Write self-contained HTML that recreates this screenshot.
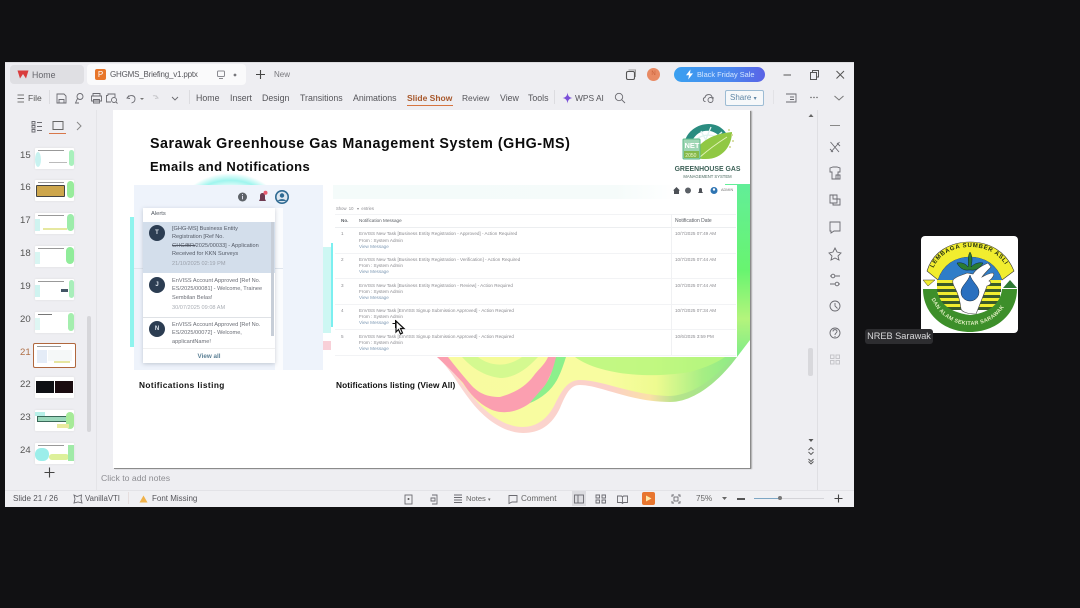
<!DOCTYPE html>
<html lang="en"><head><meta charset="utf-8"><title>GHGMS Briefing</title>
<style>
html,body{margin:0;padding:0;background:#111113;}
body{width:1080px;height:608px;position:relative;overflow:hidden;font-family:"Liberation Sans",sans-serif;}
#w{position:absolute;left:0;top:0;width:1080px;height:608px;background:#111113;filter:blur(.35px);overflow:hidden;}
.a{position:absolute;white-space:nowrap;}
.t{position:absolute;white-space:nowrap;color:#55555a;font-size:8.8px;line-height:12px;}
.m{position:absolute;white-space:nowrap;color:#8b8b90;font-size:4.6px;line-height:6px;}
.n{position:absolute;white-space:nowrap;color:#6a6d75;font-size:5.6px;line-height:8.3px;}
.num{position:absolute;left:20px;font-size:9.6px;line-height:12px;color:#555;}
.th{position:absolute;left:35px;width:39px;height:21px;background:#fff;border-radius:1px;box-shadow:0 0 2px #ddd;overflow:hidden;}
svg{position:absolute;overflow:visible;}
.ic{fill:none;stroke:#6a6a70;stroke-width:.9;}
</style></head><body><div id="w">

<!-- window -->
<div class="a" style="left:5px;top:62px;width:849px;height:445px;background:#eeeef2;"></div>
<div class="a" style="left:5px;top:62px;width:849px;height:1px;background:#dddde0;"></div>

<!-- tabs -->
<div class="a" style="left:10px;top:65px;width:74px;height:19px;background:#dfdfe3;border-radius:4px;"></div>
<div class="a" style="left:87px;top:64px;width:159px;height:21px;background:#fafafb;border-radius:4px;"></div>
<svg style="left:17px;top:70px" width="12" height="9" viewBox="0 0 12 9"><path d="M0.5 0.5H11.5L9 8.5L6 4L3 8.5Z" fill="#d93d3d"/></svg>
<div class="t" style="left:32px;top:69px;color:#66666c;">Home</div>
<div class="a" style="left:95px;top:69px;width:11px;height:11px;background:#e8762a;border-radius:2px;color:#fff;font-size:8px;line-height:11px;text-align:center;">P</div>
<div class="t" style="left:110px;top:69px;color:#57575c;font-size:8px;letter-spacing:-.2px;">GHGMS_Briefing_v1.pptx</div>
<svg style="left:216px;top:70px" width="22" height="10"><rect x="1.5" y="1" width="7" height="5.5" rx="1" fill="none" stroke="#8a8a90"/><path d="M3 8.5H7" stroke="#8a8a90"/><circle cx="19" cy="5" r="1.4" fill="#77777c"/></svg>
<svg style="left:255px;top:69px" width="11" height="11"><path d="M5.5 1V10M1 5.5H10" stroke="#444" stroke-width="1.1"/></svg>
<div class="t" style="left:274px;top:69px;color:#77777c;font-size:8px;">New</div>

<!-- title bar right -->
<svg style="left:625px;top:69px" width="12" height="12"><rect x="1.5" y="2.5" width="8" height="8" rx="1.5" fill="none" stroke="#555" stroke-width="1.1"/><path d="M3.5 1H10.5V8" fill="none" stroke="#999"/></svg>
<div class="a" style="left:647px;top:68px;width:13px;height:13px;border-radius:50%;background:#e88a64;color:#c9623c;font-size:6px;line-height:13px;text-align:center;">N</div>
<div class="a" style="left:674px;top:67px;width:91px;height:15px;border-radius:8px;background:linear-gradient(90deg,#3aa0f0,#4a88ee 60%,#5a62e6);color:#d6e8ff;font-size:7.4px;line-height:15px;text-indent:23px;">Black Friday Sale</div>
<svg style="left:685px;top:69px" width="9" height="11"><path d="M5.5 0.5L1 6.3H4L3.2 10.5L8 4.4H5Z" fill="#fff"/></svg>
<svg style="left:783px;top:69px" width="62" height="12"><path d="M0.5 6H8" stroke="#555"/><rect x="27.5" y="3.5" width="6" height="7" fill="none" stroke="#555"/><path d="M29.5 3.5V1.5H35.5V8H33.5" fill="none" stroke="#555"/><path d="M53.5 2L61 9.5M61 2L53.5 9.5" stroke="#555"/></svg>

<!-- ribbon -->
<svg style="left:17px;top:94px" width="8" height="9"><path d="M0.5 1H7M0.5 4.5H7M0.5 8H7" stroke="#777"/></svg>
<div class="t" style="left:28px;top:92px;color:#555;font-size:8.5px;">File</div>
<div class="a" style="left:49px;top:90px;width:1px;height:14px;background:#dcdce0;"></div>
<svg style="left:56px;top:92px" width="125" height="13" viewBox="0 0 125 13">
<path class="ic" d="M1 2H8L10 4V11H1ZM3 11V7.5H8V11"/>
<circle class="ic" cx="24" cy="4.5" r="3"/><path class="ic" d="M21.5 6.5L19.5 11H23"/>
<path class="ic" d="M37 4V1.5H44V4M35.5 4H45.5V9H35.5ZM37.5 7.5H43.5V11H37.5Z"/>
<path class="ic" d="M52 3.5V2H59V5M52 3.5H50.5V10H55"/><circle class="ic" cx="58" cy="8" r="2.5"/><path class="ic" d="M60 10L61.5 11.5"/>
<path class="ic" d="M73 3.5L71 6L74 6.5M71.5 5.5C74 2.5 79 3 79 7C79 9 77.5 10.5 75.5 11"/><path d="M84 6L86 8L88 6" fill="#777"/>
<path d="M100 3.5L102 6L99 6.5M101.5 5.5C99 2.5 97 4 97 4" fill="none" stroke="#c8c8cc"/>
<path class="ic" d="M116 5L119 8L122 5"/>
</svg>
<div class="a" style="left:189px;top:90px;width:1px;height:14px;background:#dcdce0;"></div>
<div class="t" style="left:196px;top:92px;">Home</div>
<div class="t" style="left:230px;top:92px;">Insert</div>
<div class="t" style="left:262px;top:92px;">Design</div>
<div class="t" style="left:300px;top:92px;">Transitions</div>
<div class="t" style="left:353px;top:92px;">Animations</div>
<div class="t" style="left:407px;top:92px;color:#a8582c;font-weight:bold;font-size:8.5px;">Slide Show</div>
<div class="a" style="left:407px;top:105px;width:46px;height:1px;background:#d6743f;"></div>
<div class="t" style="left:462px;top:92px;font-size:8.4px;">Review</div>
<div class="t" style="left:500px;top:92px;">View</div>
<div class="t" style="left:528px;top:92px;">Tools</div>
<div class="a" style="left:554px;top:90px;width:1px;height:14px;background:#dcdce0;"></div>
<svg style="left:562px;top:92px" width="11" height="12"><path d="M5.5 0.5C6 4 7 5.3 10.5 6C7 6.7 6 8 5.5 11.5C5 8 4 6.7 0.5 6C4 5.3 5 4 5.5 0.5Z" fill="#7a4fd8"/></svg>
<div class="t" style="left:575px;top:92px;font-size:8.4px;">WPS AI</div>
<svg style="left:614px;top:92px" width="12" height="12"><circle class="ic" cx="5" cy="5" r="3.7"/><path class="ic" d="M7.8 7.8L11 11"/></svg>
<svg style="left:702px;top:92px" width="13" height="12"><path class="ic" d="M3.5 9.5C1 9.5 0.5 6 3 5.5C3.5 2 9 1.5 10 5C11 5.3 11.5 6 11.5 6.5"/><circle class="ic" cx="8.5" cy="8" r="2.5"/></svg>
<div class="a" style="left:725px;top:90px;width:37px;height:14px;border:1px solid #9dbcd4;border-radius:2px;background:#f6f8fa;color:#5f86a6;font-size:8px;line-height:14px;text-indent:4px;">Share <span style="font-size:6px;">&#9662;</span></div>
<div class="a" style="left:773px;top:90px;width:1px;height:14px;background:#e2e2e6;"></div>
<svg style="left:785px;top:92px" width="60" height="12"><path class="ic" d="M3 2H11V10H3M1 2H3M1 10H3M5 5H9M5 7.5H9"/><circle cx="26" cy="5.5" r=".7" fill="#555"/><circle cx="29" cy="5.5" r=".7" fill="#555"/><circle cx="32" cy="5.5" r=".7" fill="#555"/><path d="M49.5 4L54 8L58.5 4" fill="none" stroke="#777"/></svg>

<!-- left pane -->
<div class="a" style="left:96px;top:110px;width:1px;height:380px;background:#e4e4e8;"></div>
<svg style="left:31px;top:120px" width="55" height="15"><path class="ic" d="M1 1.5H4V4H1ZM1 5.5H4V8H1ZM1 9.5H4V12H1ZM6 2.5H11M6 6.5H11M6 10.5H11" stroke-width=".8"/><rect x="22" y="1.5" width="10" height="8" fill="none" stroke="#666"/><path d="M46 2L50 6L46 10" fill="none" stroke="#888"/></svg>
<div class="a" style="left:49px;top:133px;width:17px;height:1px;background:#d8774a;"></div>

<div class="num" style="top:150px;">15</div>
<div class="num" style="top:182px;">16</div>
<div class="num" style="top:215px;">17</div>
<div class="num" style="top:248px;">18</div>
<div class="num" style="top:281px;">19</div>
<div class="num" style="top:314px;">20</div>
<div class="num" style="top:347px;color:#b07048;">21</div>
<div class="num" style="top:379px;">22</div>
<div class="num" style="top:412px;">23</div>
<div class="num" style="top:445px;">24</div>

<div class="th" style="top:148px;"><div class="a" style="left:3px;top:2px;width:26px;height:1px;background:#999;"></div><div class="a" style="left:0;top:4px;width:6px;height:15px;background:#c8f2f0;border-radius:50%;"></div><div class="a" style="right:0;top:2px;width:5px;height:16px;background:#a8f0bc;border-radius:3px;"></div><div class="a" style="left:14px;top:14px;width:18px;height:1px;background:#bbb;"></div></div>
<div class="th" style="top:180px;"><div class="a" style="left:3px;top:2px;width:26px;height:1px;background:#999;"></div><div class="a" style="left:1px;top:5px;width:27px;height:10px;background:#cda64c;border:1px solid #444;border-radius:1px;"></div><div class="a" style="right:0;top:1px;width:7px;height:17px;background:#98ec9c;border-radius:4px;"></div></div>
<div class="th" style="top:213px;"><div class="a" style="left:3px;top:2px;width:26px;height:1px;background:#999;"></div><div class="a" style="left:0;top:6px;width:5px;height:12px;background:#cff3f0;"></div><div class="a" style="right:0;top:1px;width:7px;height:17px;background:#9cecaa;border-radius:4px;"></div><div class="a" style="left:8px;top:15px;width:24px;height:2px;background:#e6e8a0;"></div></div>
<div class="th" style="top:246px;"><div class="a" style="left:3px;top:2px;width:26px;height:1px;background:#999;"></div><div class="a" style="left:0;top:6px;width:5px;height:12px;background:#d8f5f2;"></div><div class="a" style="right:0;top:1px;width:8px;height:17px;background:#90ec9a;border-radius:5px;"></div></div>
<div class="th" style="top:279px;"><div class="a" style="left:3px;top:2px;width:26px;height:1px;background:#999;"></div><div class="a" style="left:0;top:6px;width:5px;height:12px;background:#cff3f0;"></div><div class="a" style="right:0;top:1px;width:5px;height:18px;background:#a8eeba;border-radius:3px;"></div><div class="a" style="left:26px;top:10px;width:7px;height:3px;background:#456;"></div></div>
<div class="th" style="top:312px;"><div class="a" style="left:3px;top:2px;width:14px;height:1px;background:#777;"></div><div class="a" style="left:0;top:6px;width:5px;height:12px;background:#def6f3;"></div><div class="a" style="right:0;top:1px;width:6px;height:18px;background:#a4eeae;border-radius:4px;"></div></div>
<div class="a" style="left:33px;top:343px;width:41px;height:23px;border:1px solid #b0673d;border-radius:2px;background:#fff;overflow:hidden;"><div class="a" style="left:3px;top:2px;width:24px;height:1px;background:#999;"></div><div class="a" style="left:3px;top:6px;width:10px;height:13px;background:#e4ecf7;"></div><div class="a" style="left:14px;top:6px;width:24px;height:11px;background:#f5f8f8;"></div><div class="a" style="left:20px;top:17px;width:16px;height:2px;background:#e6e6a0;"></div></div>
<div class="th" style="top:377px;"><div class="a" style="left:1px;top:4px;width:18px;height:12px;background:#0e1014;"></div><div class="a" style="left:20px;top:4px;width:18px;height:12px;background:#1a0c10;"></div></div>
<div class="th" style="top:410px;"><div class="a" style="left:2px;top:6px;width:29px;height:4px;background:#9bd8bc;border:1px solid #3a6a5a;"></div><div class="a" style="right:0;top:2px;width:8px;height:17px;background:#a6ea98;border-radius:4px;"></div><div class="a" style="left:0;top:2px;width:10px;height:4px;background:#b8f0e8;"></div><div class="a" style="left:22px;top:14px;width:12px;height:4px;background:#e8ea9e;"></div></div>
<div class="th" style="top:443px;"><div class="a" style="left:3px;top:2px;width:26px;height:1px;background:#999;"></div><div class="a" style="left:0;top:5px;width:14px;height:13px;background:#9ceeea;border-radius:6px;"></div><div class="a" style="left:14px;top:11px;width:20px;height:6px;background:#ddf09a;border-radius:3px;"></div><div class="a" style="right:0;top:2px;width:6px;height:16px;background:#a0eaa8;"></div></div>
<div class="a" style="left:87px;top:316px;width:4px;height:116px;background:#d6d6da;border-radius:2px;"></div>
<svg style="left:44px;top:467px" width="11" height="11"><path d="M5.5 0.5V10.5M0.5 5.5H10.5" stroke="#444" stroke-width="1.1"/></svg>

<!-- slide -->
<div class="a" style="left:113px;top:110px;width:637px;height:358px;background:#fff;box-shadow:1px 1px 0 #8b8b8b,2px 1px 1px #aaa;overflow:hidden;"></div>
<svg style="left:113px;top:110px" width="637" height="358" viewBox="113 110 637 358">
<defs>
<radialGradient id="tg" cx=".5" cy=".5" r=".5"><stop offset=".7" stop-color="#fff"/><stop offset=".86" stop-color="#9ff5ee"/><stop offset="1" stop-color="#fff"/></radialGradient>
<linearGradient id="outer" x1="437" y1="0" x2="750" y2="0" gradientUnits="userSpaceOnUse"><stop offset="0" stop-color="#fbd8d4"/><stop offset=".55" stop-color="#fbd0c8"/><stop offset=".68" stop-color="#fbe0a8"/><stop offset=".76" stop-color="#b8e48c"/><stop offset="1" stop-color="#8ce688"/></linearGradient>
<linearGradient id="inner" x1="437" y1="0" x2="750" y2="0" gradientUnits="userSpaceOnUse"><stop offset="0" stop-color="#f8fba0"/><stop offset=".55" stop-color="#f8fca0"/><stop offset=".7" stop-color="#eefb90"/><stop offset=".85" stop-color="#a6ee84"/><stop offset="1" stop-color="#82ea88"/></linearGradient>
<linearGradient id="gr" x1="0" y1="184" x2="0" y2="357" gradientUnits="userSpaceOnUse"><stop offset="0" stop-color="#62ee98"/><stop offset=".5" stop-color="#68f470"/><stop offset=".78" stop-color="#b4f47c"/><stop offset="1" stop-color="#7eec88"/></linearGradient>
</defs>
<ellipse cx="230" cy="225" rx="58" ry="52" fill="url(#tg)"/>
<rect x="130" y="217" width="5" height="130" fill="#8ff4ee"/>
<rect x="323" y="247" width="8" height="86" fill="#cdf7f3"/>
<rect x="323" y="341" width="8" height="9" fill="#f8d0d8"/>
<rect x="331" y="243" width="2" height="84" fill="#7beff0"/>
<path d="M725 184H750V340L737 357H725Z" fill="url(#gr)"/>
<path d="M437 357C450 368 458 385 470 400C485 420 505 433 523 433C540 433 552 425 560 408C566 394 570 385 580 385C600 385 630 402 670 402C695 402 720 380 737 357Z" fill="url(#outer)"/>
<path d="M440 357C452 368 462 384 474 398C488 415 506 427 522 427C538 427 548 418 555 404C562 390 568 380 580 380C602 380 632 395 668 396C692 396 716 378 732 357Z" fill="url(#inner)"/>
<path d="M437 357C447 366 456 375 463 383C470 394 478 403 490 409C500 414 515 414 530 403C540 395 545 388 548 380C552 372 555 365 557 357H548C545 364 540 368 535 374C528 384 518 392 500 397C488 397 480 394 472 386C463 376 455 366 448 357Z" fill="#fb9fb0"/>
<path d="M462 357C472 368 484 376 500 378C514 378 526 370 538 357Z" fill="#d4f990"/>
<path d="M478 357C488 365 505 369 522 357Z" fill="#f4fb98"/>
<path d="M556 357C553 370 549 382 541 390C536 396 532 400 530 403C542 398 552 390 558 378C562 370 564 363 566 357Z" fill="#8cf08c"/>
<path d="M575 357C595 372 640 380 690 372C705 368 718 362 725 357Z" fill="#b8f77e" opacity=".85"/>
</svg>

<div class="a" style="left:150px;top:136px;font-size:14.3px;line-height:17px;font-weight:bold;color:#0b0b0b;letter-spacing:.52px;">Sarawak Greenhouse Gas Management System (GHG-MS)</div>
<div class="a" style="left:150px;top:159px;font-size:13px;line-height:16px;font-weight:bold;color:#0b0b0b;letter-spacing:.38px;">Emails and Notifications</div>

<!-- GHG logo -->
<svg style="left:680px;top:120px" width="60" height="50" viewBox="0 0 60 50">
<path d="M4 25C6 8 25 0 38 6C44 9 47 14 48 17L42 20C38 12 28 8 19 13C13 17 11 22 11 28Z" fill="#2a8c80"/>
<path d="M12 24C18 15 30 12 41 19M21 11L29 26M31 7L21 31M42 12L32 21" stroke="#dff3ef" stroke-width="1.3" fill="none"/>
<path d="M15 36C16 24 30 14 52 12C52 26 42 40 24 39C20 39 17 38 15 36Z" fill="#90c843"/>
<path d="M20 37C28 30 36 24 47 17" stroke="#e2f3b8" fill="none"/>
<rect x="3" y="19" width="17" height="20" rx="1" fill="#9fd6b4" stroke="#5cb98a"/>
<text x="4.5" y="28" font-family="Liberation Sans" font-size="7.5" font-weight="bold" fill="#fff">NET</text>
<rect x="4" y="31" width="15" height="7" fill="#84b94a"/>
<text x="5.3" y="37" font-family="Liberation Sans" font-size="5" fill="#eef8d0">2050</text>
<circle cx="49" cy="10" r="1" fill="#cfd48e"/><circle cx="52" cy="15" r="1" fill="#cfd48e"/><circle cx="53" cy="21" r="1" fill="#cfd48e"/><circle cx="50" cy="27" r="1" fill="#cfd48e"/>
</svg>
<div class="a" style="left:673px;top:166px;width:69px;text-align:center;font-size:6.9px;line-height:8px;font-weight:bold;color:#3e6258;">GREENHOUSE GAS</div>
<div class="a" style="left:673px;top:174px;width:69px;text-align:center;font-size:4.2px;line-height:6px;color:#4c6a60;">MANAGEMENT SYSTEM</div>

<!-- left screenshot -->
<div class="a" style="left:134px;top:185px;width:189px;height:185px;background:#eef3fb;"></div>
<div class="a" style="left:275px;top:208px;width:8px;height:162px;background:#fbfcfe;"></div>
<div class="a" style="left:134px;top:268px;width:149px;height:1px;background:#dfe5ed;"></div>
<svg style="left:235px;top:189px" width="55" height="16" viewBox="0 0 55 16">
<circle cx="7.5" cy="8" r="4.5" fill="#5d6268"/><rect x="7" y="6.8" width="1" height="3.5" fill="#dde"/><rect x="7" y="5" width="1" height="1" fill="#dde"/>
<path d="M24 12H31L30 10V7C30 5 29 4 27.5 4C26 4 25 5 25 7V10Z" fill="#6e3a50"/><circle cx="30.5" cy="3.7" r="2" fill="#e85a70"/>
<circle cx="47" cy="8" r="7" fill="#2f6a92"/><circle cx="47" cy="8" r="5.4" fill="#dde7f0"/><circle cx="47" cy="6.5" r="2.2" fill="#2f6a92"/><path d="M43 12C43.5 9.5 50.5 9.5 51 12Z" fill="#2f6a92"/>
</svg>
<div class="a" style="left:143px;top:208px;width:132px;height:155px;background:#fff;box-shadow:0 1px 4px rgba(90,100,120,.3);"></div>
<div class="a" style="left:151px;top:210px;font-size:5.8px;line-height:9px;color:#555b64;">Alerts</div>
<div class="a" style="left:143px;top:222px;width:132px;height:51px;background:#d3deeb;"></div>
<div class="a" style="left:271px;top:222px;width:3px;height:114px;background:#c7ced8;"></div>
<div class="a" style="left:143px;top:317px;width:128px;height:1px;background:#dfe2e6;"></div>
<div class="a" style="left:143px;top:348px;width:132px;height:1px;background:#f0f0f0;"></div>
<div class="a" style="left:149px;top:225px;width:16px;height:16px;border-radius:50%;background:#2c3d52;color:#dfe6ee;font-size:6px;line-height:16px;text-align:center;font-weight:bold;">T</div>
<div class="a" style="left:149px;top:277px;width:16px;height:16px;border-radius:50%;background:#2c3d52;color:#dfe6ee;font-size:6px;line-height:16px;text-align:center;font-weight:bold;">J</div>
<div class="a" style="left:149px;top:321px;width:16px;height:16px;border-radius:50%;background:#2c3d52;color:#dfe6ee;font-size:6px;line-height:16px;text-align:center;font-weight:bold;">N</div>
<div class="n" style="left:172px;top:225px;color:#545a66;">[GHG-MS] Business Entity<br>Registration [Ref No.<br><span style="text-decoration:line-through;">GHG/BR/</span>2025/00033] - Application<br>Received for KKN Surveys</div>
<div class="n" style="left:172px;top:260px;color:#9ba1ab;">21/10/2025 02:19 PM</div>
<div class="n" style="left:172px;top:277px;">EnVISS Account Approved [Ref No.<br>ES/2025/00081] - Welcome, Trainee<br>Sembilan Belas!</div>
<div class="n" style="left:172px;top:304px;color:#aaaeb5;">30/07/2025 09:08 AM</div>
<div class="n" style="left:172px;top:321px;">EnVISS Account Approved [Ref No.<br>ES/2025/00072] - Welcome,<br>applicantName!</div>
<div class="a" style="left:143px;top:352px;width:132px;text-align:center;font-size:6.3px;line-height:9px;font-weight:bold;color:#5d8196;">View all</div>
<div class="a" style="left:139px;top:380px;font-size:8.3px;line-height:11px;font-weight:bold;color:#111;letter-spacing:.42px;">Notifications listing</div>

<!-- right screenshot -->
<div class="a" style="left:333px;top:185px;width:404px;height:172px;background:#fff;"></div>
<div class="a" style="left:333px;top:185px;width:404px;height:14px;background:linear-gradient(90deg,#f4fbfa,#f5fbfa 70%,#fff 85%);"></div>
<svg style="left:672px;top:185px" width="62" height="11" viewBox="0 0 62 11">
<path d="M1 5.5L4.5 2L8 5.5H7V9H2V5.5Z" fill="#4d5157"/><circle cx="16" cy="5.5" r="3" fill="#5b6066"/><path d="M26 8H31L30 6.5V4.5C30 3.5 29.4 3 28.5 3C27.6 3 27 3.5 27 4.5V6.5Z" fill="#4d5157"/><circle cx="42" cy="5.5" r="3.5" fill="#2e74b2"/><circle cx="42" cy="4.500" r="1.2" fill="#fff"/>
</svg>
<div class="a" style="left:721px;top:187px;font-size:3.8px;line-height:6px;color:#777;">ADMIN</div>
<div class="m" style="left:336px;top:206px;font-size:4.2px;">Show &nbsp;10 &nbsp; &#9662; &nbsp;entries</div>
<div class="a" style="left:335px;top:214px;width:401px;height:1px;background:#f2f3f5;"></div>
<div class="a" style="left:335px;top:227px;width:401px;height:1px;background:#eceef0;"></div>
<div class="a" style="left:335px;top:253px;width:401px;height:1px;background:#f2f3f5;"></div>
<div class="a" style="left:335px;top:278px;width:401px;height:1px;background:#f2f3f5;"></div>
<div class="a" style="left:335px;top:304px;width:401px;height:1px;background:#f2f3f5;"></div>
<div class="a" style="left:335px;top:329px;width:401px;height:1px;background:#f2f3f5;"></div>
<div class="a" style="left:335px;top:355px;width:401px;height:1px;background:#f2f3f5;"></div>
<div class="a" style="left:671px;top:214px;width:1px;height:141px;background:#f0f1f3;"></div>
<div class="m" style="left:341px;top:218px;color:#5c6066;font-weight:bold;">No.</div>
<div class="m" style="left:359px;top:218px;color:#5c6066;">Notification Message</div>
<div class="m" style="left:675px;top:218px;color:#5c6066;font-size:5px;">Notification Date</div>

<div class="m" style="left:341px;top:231px;">1</div>
<div class="m" style="left:359px;top:231px;">EnVISS New Task [Business Entity Registration - Approved] - Action Required</div>
<div class="m" style="left:359px;top:237.5px;">From : System Admin</div>
<div class="m" style="left:359px;top:243.5px;color:#7f9ab5;">View Message</div>
<div class="m" style="left:675px;top:231px;">10/7/2025 07:49 AM</div>

<div class="m" style="left:341px;top:257px;">2</div>
<div class="m" style="left:359px;top:257px;">EnVISS New Task [Business Entity Registration - Verification] - Action Required</div>
<div class="m" style="left:359px;top:263px;">From : System Admin</div>
<div class="m" style="left:359px;top:269px;color:#7f9ab5;">View Message</div>
<div class="m" style="left:675px;top:257px;">10/7/2025 07:44 AM</div>

<div class="m" style="left:341px;top:282.5px;">3</div>
<div class="m" style="left:359px;top:282.5px;">EnVISS New Task [Business Entity Registration - Review] - Action Required</div>
<div class="m" style="left:359px;top:288.5px;">From : System Admin</div>
<div class="m" style="left:359px;top:294.5px;color:#7f9ab5;">View Message</div>
<div class="m" style="left:675px;top:282.5px;">10/7/2025 07:44 AM</div>

<div class="m" style="left:341px;top:308px;">4</div>
<div class="m" style="left:359px;top:308px;">EnVISS New Task [EnVISS Signup Submission Approved] - Action Required</div>
<div class="m" style="left:359px;top:314px;">From : System Admin</div>
<div class="m" style="left:359px;top:320px;color:#7f9ab5;">View Message</div>
<div class="m" style="left:675px;top:308px;">10/7/2025 07:34 AM</div>

<div class="m" style="left:341px;top:333.5px;">5</div>
<div class="m" style="left:359px;top:333.5px;">EnVISS New Task [EnVISS Signup Submission Approved] - Action Required</div>
<div class="m" style="left:359px;top:339.5px;">From : System Admin</div>
<div class="m" style="left:359px;top:345.5px;color:#7f9ab5;">View Message</div>
<div class="m" style="left:675px;top:333.5px;">10/6/2025 3:59 PM</div>

<div class="a" style="left:336px;top:380px;font-size:8.3px;line-height:11px;font-weight:bold;color:#111;letter-spacing:.1px;">Notifications listing (View All)</div>

<!-- cursor -->
<svg style="left:392px;top:315px" width="16" height="20" viewBox="0 0 16 20">
<path d="M3.5 5V13M0.5 8.5H7" stroke="#111" stroke-width="1" fill="none"/>
<path d="M4 6L4 17L6.5 14.5L8.5 19L10.5 18L8.5 13.5L12 13.5Z" fill="#fff" stroke="#111" stroke-width="1.2"/>
</svg>

<!-- right scrollbar & rail -->
<div class="a" style="left:817px;top:110px;width:1px;height:380px;background:#dfdfe3;"></div>
<div class="a" style="left:808px;top:348px;width:5px;height:28px;background:#d8d8dc;border-radius:2px;"></div>
<svg style="left:808px;top:113px" width="6" height="5"><path d="M0.5 4L3 1L5.5 4Z" fill="#666"/></svg>
<svg style="left:808px;top:438px" width="6" height="28"><path d="M0.5 1L3 4L5.5 1Z" fill="#555"/><path d="M0.5 12L3 9.5L5.500 12M0.5 14L3 16.5L5.5 14M.5 21L3 23.5L5.5 21M.5 23.5L3 26L5.5 23.5" fill="none" stroke="#555" stroke-width=".9"/></svg>
<svg style="left:829px;top:120px" width="12" height="250" viewBox="0 0 12 250">
<path d="M1 5.5H11" stroke="#888"/>
<path class="ic" d="M1.500 22L10 32M10.500 22L2 32M8 23L11 26M1 29L4 32"/>
<path class="ic" d="M1 48L4 47H8L11 48L11 52H9V59H3V52H1ZM7 55H11V59H7Z"/>
<path class="ic" d="M1 75H8V83H1ZM4 75V79H11V85H4V83"/>
<path class="ic" d="M1 102H11V111H5L2 113V111H1Z"/>
<path class="ic" d="M6 128L8 132L12 133L9 136L10 140L6 138L2 140L3 136L0 133L4 132Z"/>
<path class="ic" d="M1 156H11M1 164H11"/><circle cx="4" cy="156" r="1.800" fill="#eeeef2" stroke="#6a6a70" stroke-width=".9"/><circle cx="8" cy="164" r="1.800" fill="#eeeef2" stroke="#6a6a70" stroke-width=".9"/>
<circle class="ic" cx="6" cy="186" r="5"/><path class="ic" d="M6 183V186L8.500 188.500"/>
<circle class="ic" cx="6" cy="213" r="5"/><path class="ic" d="M4 211.500C4 209 8 209 8 211.500C8 213 6 213 6 215M6 216V217"/>
<path d="M1.500 235H5V238.500H1.500ZM7 235H10.500V238.500H7ZM1.500 240.500H5V244H1.500ZM7 240.500H10.500V244H7Z" fill="none" stroke="#c5c5ca"/>
</svg>

<!-- notes and status -->
<div class="a" style="left:101px;top:473px;font-size:8.7px;line-height:10px;color:#8d8d92;">Click to add notes</div>
<div class="a" style="left:5px;top:490px;width:849px;height:1px;background:#e3e3e7;"></div>
<div class="a" style="left:5px;top:491px;width:849px;height:16px;background:#f0f0f3;"></div>
<div class="t" style="left:13px;top:493px;font-size:8.1px;">Slide 21 / 26</div>
<svg style="left:73px;top:494px" width="10" height="10"><path class="ic" d="M1 1L4 2.500L8.500 1L8 5L9 9L5 8L1 9L2 5Z" stroke-width=".8"/></svg>
<div class="t" style="left:85px;top:493px;font-size:7.8px;">VanillaVTI</div>
<div class="a" style="left:128px;top:492px;width:1px;height:12px;background:#e6dede;"></div>
<svg style="left:139px;top:495px" width="9" height="8"><path d="M4.500 0.500L8.500 7.500H0.500Z" fill="#f0b24a"/></svg>
<div class="t" style="left:152px;top:493px;font-size:8px;">Font Missing</div>
<svg style="left:404px;top:494px" width="34" height="11"><rect class="ic" x="1" y="1" width="7" height="9"/><circle cx="4.500" cy="5" r="1" fill="#555"/><path class="ic" d="M28 1H33V10H28M27 4H31V7H27Z"/></svg>
<svg style="left:453px;top:494px" width="10" height="10"><path class="ic" d="M1 1H9M1 3.500H9M1 6H9M1 8.500H9" stroke-width=".8"/></svg>
<div class="t" style="left:466px;top:493px;font-size:7.6px;color:#666;">Notes <span style="font-size:5px;">&#9662;</span></div>
<svg style="left:508px;top:494px" width="10" height="10"><path class="ic" d="M1 1.500H9V8H4L1 9.500Z"/></svg>
<div class="t" style="left:521px;top:493px;font-size:8.2px;color:#666;">Comment</div>
<div class="a" style="left:572px;top:491px;width:14px;height:15px;background:#dcdce0;"></div>
<svg style="left:574px;top:494px" width="60" height="10"><rect class="ic" x=".5" y="1" width="9" height="8"/><path class="ic" d="M4 1V9"/><path class="ic" d="M22 1H25.500V4H22ZM28 1H31.500V4H28ZM22 6H25.500V9H22ZM28 6H31.500V9H28Z"/><path class="ic" d="M43.500 2H47.500L48.500 3L49.500 2H53.500V8.500H49.500L48.500 9.500L47.500 8.500H43.500ZM48.500 3V9"/></svg>
<div class="a" style="left:642px;top:492px;width:13px;height:13px;background:#e8762f;border-radius:2px;"></div>
<svg style="left:645px;top:495px" width="7" height="7"><path d="M1 0.500L6.500 3.500L1 6.500Z" fill="#ffe9a8"/></svg>
<svg style="left:671px;top:494px" width="10" height="10"><path class="ic" d="M1 3V1H3M7 1H9V3M9 7V9H7M3 9H1V7"/><rect class="ic" x="3" y="3" width="4" height="4"/></svg>
<div class="t" style="left:696px;top:493px;font-size:8.1px;color:#666;">75%</div>
<svg style="left:721px;top:495px" width="7" height="7"><path d="M1 2L3.500 5L6 2Z" fill="#666"/></svg>
<div class="a" style="left:737px;top:498px;width:8px;height:1.5px;background:#555;"></div>
<div class="a" style="left:754px;top:498px;width:70px;height:1px;background:#d4d4d8;"></div>
<div class="a" style="left:754px;top:498px;width:25px;height:1px;background:#7da6c4;"></div>
<div class="a" style="left:778px;top:496px;width:4px;height:4px;border-radius:50%;background:#777;"></div>
<svg style="left:834px;top:494px" width="9" height="9"><path d="M4.500 .5V8.500M.5 4.500H8.500" stroke="#444" stroke-width="1.1"/></svg>

<!-- participant tile -->
<div class="a" style="left:921px;top:236px;width:97px;height:97px;background:#fff;border-radius:4px;overflow:hidden;">
<svg style="left:0;top:0" width="97" height="97" viewBox="0 0 97 97">
<defs><path id="tp1" d="M12 33C18 18 33 11 49 11C65 11 79 18 86 32"/><path id="tp2" d="M10 62C18 80 33 89 49 89C66 89 80 80 88 62"/></defs>
<path d="M6 35C12 15 30 6 49 6C68 6 85 15 93 35L81 44C76 29 64 21 49 21C34 21 22 29 17 44Z" fill="#f1ed2f" stroke="#333" stroke-width=".6"/>
<path d="M17 44C22 29 34 21 49 21C64 21 76 29 81 44Z" fill="#2f7dc8"/>
<path d="M2 44H14L7 50ZM3 44" fill="#f1ed2f" stroke="#333" stroke-width=".5"/>
<path d="M89 44L96 52H82Z" fill="#2e7a33"/>
<path d="M16 44H80V47H16ZM16 50H80V53H16ZM17 56H79V59H17ZM18 62H78V65H18ZM22 68H74V71H22Z" fill="#f1ed2f"/>
<path d="M16 47H80V50H16ZM16 53H80V56H16ZM17 59H79V62H17ZM18 65H78V68H18ZM22 71H74V74H22Z" fill="#3a5a2a"/>
<path d="M2 53L16 53C17 64 25 76 49 79C72 77 80 64 81 53L96 53C96 78 75 96 49 96C23 96 2 78 2 53Z" fill="#3d8f2a"/>
<path d="M32 44C35 40 42 39 46 37L52 38C55 33 60 30 67 27L70 31C66 35 63 38 61 41C65 39 68 37 72 37C74 38 72 42 68 45C71 46 70 49 66 50C63 58 59 68 55 78C47 78 41 76 40 73C39 65 38 60 35 54C33 50 31 47 32 44Z" fill="#fff" stroke="#444" stroke-width=".6"/>
<path d="M49 39C47 46 40 50 40 56C40 62 45 65 49 65C54 65 58 61 58 56C58 50 51 46 49 39Z" fill="#2a70bf" stroke="#123" stroke-width=".5"/>
<path d="M48 34C42 35 38 31 36 27C41 26 45 28 47 31C48 26 46 21 49 16C52 21 51 26 50 31C53 28 57 26 62 27C60 31 55 35 50 34Z" fill="#2b7c32" stroke="#123" stroke-width=".5"/>
<text font-family="Liberation Sans" font-size="6" font-weight="bold" fill="#1d2a12" letter-spacing=".7"><textPath href="#tp1" startOffset="1">LEMBAGA SUMBER ASLI</textPath></text>
<text font-family="Liberation Sans" font-size="5.4" font-weight="bold" fill="#dfeec0" letter-spacing=".3"><textPath href="#tp2" startOffset="1">DAN ALAM SEKITAR SARAWAK</textPath></text>
</svg>
</div>
<div class="a" style="left:865px;top:329px;width:68px;height:15px;background:#2d2d30;border-radius:3px;color:#d8d8da;font-size:9.2px;line-height:15px;text-align:center;">NREB Sarawak</div>
</div></body></html>
